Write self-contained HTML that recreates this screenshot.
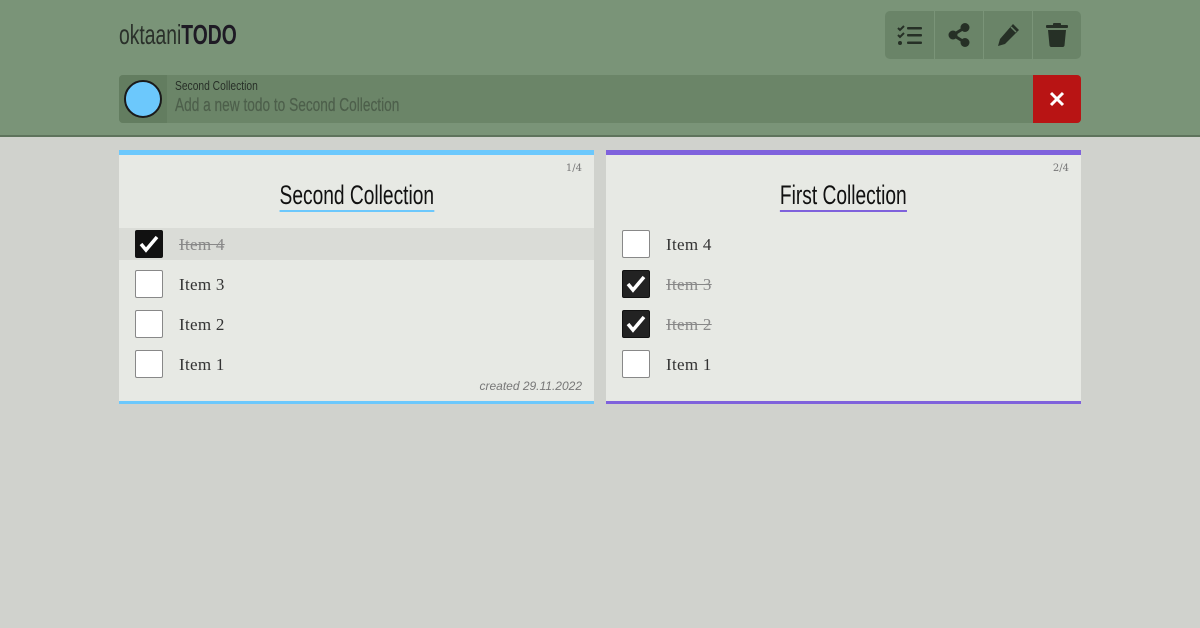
<!DOCTYPE html>
<html><head><style>
*{box-sizing:border-box;margin:0;padding:0}
body{width:1200px;height:628px;background:#d0d2cd;font-family:"Liberation Sans",sans-serif;position:relative;overflow:hidden}
.n{display:inline-block;transform:scaleX(0.76);transform-origin:0 50%;white-space:nowrap}
.hdr{position:absolute;left:0;top:0;width:1200px;height:137px;background:#7a9478;border-bottom:2px solid #5e735c}
.logo{position:absolute;left:119px;top:19px;font-size:28px;color:#2a302a}
.logo b{color:#1e1a24}
.btns{position:absolute;left:885px;top:11px;width:196px;height:48px;background:#6a8468;border-radius:5px;display:flex;overflow:hidden}
.btns div{width:49px;height:48px;border-left:1px solid #7a9478;display:flex;align-items:center;justify-content:center}
.btns div:first-child{border-left:none}
.bar{position:absolute;left:119px;top:75px;width:962px;height:48px;background:#6b8568;border-radius:4px;overflow:hidden}
.circ{position:absolute;left:0;top:0;width:48px;height:48px;background:#637d60}
.circ i{position:absolute;left:5px;top:5px;width:38px;height:38px;border-radius:50%;background:#6cc8fc;border:2px solid #1a1a1a}
.lbl{position:absolute;left:56px;top:3px;font-size:13px;color:#283028}
.ph{position:absolute;left:56px;top:20px;font-size:18px;color:#4d5f4b;-webkit-text-stroke:0.2px #4d5f4b}
.x{position:absolute;right:0;top:0;width:48px;height:48px;background:#b81414;display:flex;align-items:center;justify-content:center}
.card{position:absolute;top:150px;width:475px;height:254px;background:#e7e9e4;border-top:5px solid;border-bottom:3px solid}
.cnt{position:absolute;right:12px;top:8px;font-family:"DejaVu Serif",serif;font-size:10px;color:#777}
.ttl{position:absolute;top:25px;font-size:27px;color:#111}
.ttl .n{transform-origin:50% 50%}
.ttl span span{border-bottom:2px solid}
.row{position:absolute;left:0;width:475px;height:32px}
.cb{position:absolute;left:16px;top:2px;width:28px;height:28px;background:#fff;border:1px solid #888;border-radius:2px}
.cb.on{background:#111;border-color:#111}
.txt{position:absolute;left:60px;top:7px;font-family:"Liberation Serif","DejaVu Serif",serif;font-size:17px;color:#333;letter-spacing:.3px}
.txt.done{text-decoration:line-through;color:#888}
.crt{position:absolute;right:12px;bottom:8px;font-style:italic;font-size:12px;color:#777}
</style></head><body>
<div class="hdr">
<div class="logo"><span class="n" style="transform:scaleX(0.69)">oktaani<b>TODO</b></span></div>
<div class="btns">
<div><svg width="26" height="22" viewBox="0 0 26 22" fill="#263026"><path d="M1 4l2 2 4-4" stroke="#263026" stroke-width="2" fill="none"/><path d="M1 11l2 2 4-4" stroke="#263026" stroke-width="2" fill="none"/><circle cx="3" cy="19" r="2"/><rect x="10" y="3" width="15" height="2.5" rx="1"/><rect x="10" y="10" width="15" height="2.5" rx="1"/><rect x="10" y="17.5" width="15" height="2.5" rx="1"/></svg></div>
<div><svg width="22" height="24" viewBox="0 0 22 24" fill="#263026"><circle cx="17" cy="4.5" r="4.5"/><circle cx="5" cy="12" r="4.5"/><circle cx="17" cy="19.5" r="4.5"/><path d="M5 12L17 4.5M5 12l12 7.5" stroke="#263026" stroke-width="3"/></svg></div>
<div><svg width="24" height="24" viewBox="0 0 24 24" fill="#263026"><path d="M17 1l6 6-14 14-7 2 2-7z"/><path d="M15 4l5 5" stroke="#6a8468" stroke-width="1.5"/></svg></div>
<div><svg width="22" height="24" viewBox="0 0 22 24" fill="#263026"><rect x="0" y="2" width="22" height="3" rx="1"/><rect x="7" y="0" width="8" height="3" rx="1"/><path d="M2 7h18l-1.5 15.5a2 2 0 0 1-2 1.5h-11a2 2 0 0 1-2-1.5z"/></svg></div>
</div>
<div class="bar">
<div class="circ"><i></i></div>
<div class="lbl"><span class="n" style="transform:scaleX(0.79)">Second Collection</span></div>
<div class="ph"><span class="n">Add a new todo to Second Collection</span></div>
<div class="x"><svg width="16" height="16" viewBox="0 0 16 16"><path d="M2 2l12 12M14 2L2 14" stroke="#fff" stroke-width="3"/></svg></div>
</div>
</div>

<div class="card" style="left:119px;border-color:#6cc8fc">
<div class="cnt">1/4</div>
<div class="ttl" style="left:0;width:475px;text-align:center"><span class="n" style="transform:scaleX(0.71)"><span style="border-color:#6cc8fc">Second Collection</span></span></div>
<div class="row" style="top:73px;background:#dadcd7"><div class="cb on"><svg width="26" height="26" viewBox="0 0 26 26"><path d="M5 13l5 6 11-13" stroke="#fff" stroke-width="3.5" fill="none"/></svg></div><div class="txt done">Item 4</div></div>
<div class="row" style="top:113px"><div class="cb"></div><div class="txt">Item 3</div></div>
<div class="row" style="top:153px"><div class="cb"></div><div class="txt">Item 2</div></div>
<div class="row" style="top:193px"><div class="cb"></div><div class="txt">Item 1</div></div>
<div class="crt">created 29.11.2022</div>
</div>

<div class="card" style="left:606px;border-color:#7f62dc">
<div class="cnt">2/4</div>
<div class="ttl" style="left:0;width:475px;text-align:center"><span class="n" style="transform:scaleX(0.71)"><span style="border-color:#7f62dc">First Collection</span></span></div>
<div class="row" style="top:73px"><div class="cb"></div><div class="txt">Item 4</div></div>
<div class="row" style="top:113px"><div class="cb on" style="background:#222"><svg width="26" height="26" viewBox="0 0 26 26"><path d="M5 13l5 6 11-13" stroke="#fff" stroke-width="3.5" fill="none"/></svg></div><div class="txt done">Item 3</div></div>
<div class="row" style="top:153px"><div class="cb on" style="background:#222"><svg width="26" height="26" viewBox="0 0 26 26"><path d="M5 13l5 6 11-13" stroke="#fff" stroke-width="3.5" fill="none"/></svg></div><div class="txt done">Item 2</div></div>
<div class="row" style="top:193px"><div class="cb"></div><div class="txt">Item 1</div></div>
</div>
</body></html>
